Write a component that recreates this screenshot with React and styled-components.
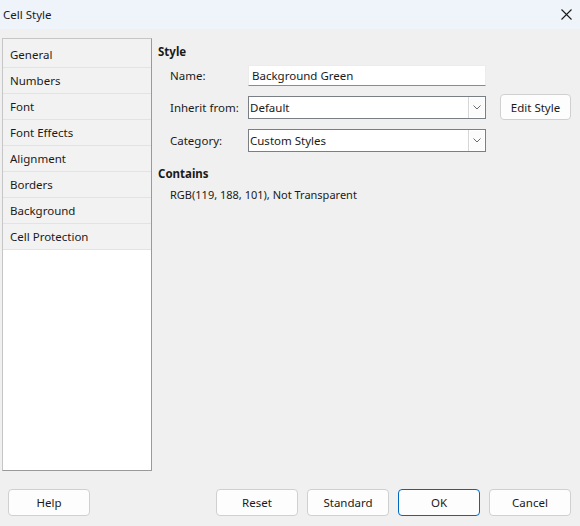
import React from "react";
import styled, { createGlobalStyle } from "styled-components";

const GlobalStyle = createGlobalStyle`
  html, body {
    margin: 0;
    padding: 0;
    background: #f0f0f0;
  }
  body {
    font-family: "Noto Sans", "Open Sans", sans-serif;
    font-size: 11.5px;
    color: #1a1a1a;
  }
`;

const pages = [
  "General",
  "Numbers",
  "Font",
  "Font Effects",
  "Alignment",
  "Borders",
  "Background",
  "Cell Protection",
];

export default function App() {
  return (
    <>
      <GlobalStyle />
      <StyledWindow>
        <StyledTitleBar>
          <StyledTitle>Cell Style</StyledTitle>
          <StyledClose aria-label="Close">
            <svg width={11} height={11} viewBox="0 0 11 11">
              <path d="M0.5 0.5L10.5 10.5M10.5 0.5L0.5 10.5" stroke="#1a1a1a" strokeWidth="1.1" />
            </svg>
          </StyledClose>
        </StyledTitleBar>

        <StyledBody>
          <StyledSidebar>
            {pages.map((page, index) => (
              <StyledTab key={page} $first={index === 0}>
                {page}
              </StyledTab>
            ))}
          </StyledSidebar>

          <StyledContent>
            <StyledHeading>Style</StyledHeading>
            <StyledForm>
              <StyledLabel>Name:</StyledLabel>
              <StyledTextField>Background Green</StyledTextField>
              <span />

              <StyledLabel>Inherit from:</StyledLabel>
              <StyledCombo>
                <StyledComboText>Default</StyledComboText>
                <StyledComboButton>
                  <Chevron />
                </StyledComboButton>
              </StyledCombo>
              <StyledButton $small>Edit Style</StyledButton>

              <StyledLabel>Category:</StyledLabel>
              <StyledCombo>
                <StyledComboText>Custom Styles</StyledComboText>
                <StyledComboButton>
                  <Chevron />
                </StyledComboButton>
              </StyledCombo>
              <span />
            </StyledForm>

            <StyledHeading $gap>Contains</StyledHeading>
            <StyledDescription>RGB(119, 188, 101), Not Transparent</StyledDescription>
          </StyledContent>
        </StyledBody>

        <StyledFooter>
          <StyledButton>Help</StyledButton>
          <StyledSpacer />
          <StyledButton>Reset</StyledButton>
          <StyledButton>Standard</StyledButton>
          <StyledButton $primary>OK</StyledButton>
          <StyledButton>Cancel</StyledButton>
        </StyledFooter>
      </StyledWindow>
    </>
  );
}

function Chevron() {
  return (
    <svg width={8} height={5} viewBox="0 0 8 5">
      <path d="M0.5 0.5L4 4L7.5 0.5" fill="none" stroke="#6a6a6a" strokeWidth="1" />
    </svg>
  );
}

const StyledWindow = styled.div`
  width: 580px;
  height: 526px;
  display: flex;
  flex-direction: column;
  background: #f0f0f0;
  overflow: hidden;
`;

const StyledTitleBar = styled.div`
  height: 29px;
  flex: none;
  display: flex;
  align-items: center;
  justify-content: space-between;
  background: #eff3fa;
  padding: 0 4px 0 3px;
`;

const StyledTitle = styled.span`
  font-size: 11.5px;
  color: #1a1a1a;
`;

const StyledClose = styled.span`
  display: flex;
  padding: 0 4px 1px 0;
`;

const StyledBody = styled.div`
  display: flex;
  gap: 6px;
  padding: 9px 8px 0 2px;
  height: 433px;
  flex: none;
`;

const StyledSidebar = styled.ul`
  list-style: none;
  margin: 0;
  padding: 0;
  width: 148px;
  flex: none;
  background: #ffffff;
  border: 1px solid;
  border-color: #c6c6c6 #9a9a9a #9a9a9a #c6c6c6;
`;

const StyledTab = styled.li`
  height: ${(props) => (props.$first ? "29px" : "26px")};
  display: flex;
  align-items: center;
  padding: ${(props) => (props.$first ? "3px 0 0 7px" : "0 0 0 7px")};
  box-sizing: border-box;
  background: #f2f2f2;
  border-bottom: 1px solid #e3e3e3;
  font-size: 11.5px;
  color: #1a1a1a;
`;

const StyledContent = styled.div`
  flex: 1;
  display: flex;
  flex-direction: column;
`;

const StyledHeading = styled.div`
  font-weight: 700;
  font-size: 11.5px;
  line-height: 16px;
  margin-top: ${(props) => (props.$gap ? "14px" : "6px")};
  color: #1a1a1a;
`;

const StyledForm = styled.div`
  display: grid;
  grid-template-columns: 64px 238px auto;
  column-gap: 14px;
  row-gap: 10px;
  align-items: center;
  padding-left: 12px;
  margin-top: 5px;
`;

const StyledLabel = styled.span`
  font-size: 11.5px;
  color: #1a1a1a;
  white-space: nowrap;
`;

const StyledTextField = styled.div`
  height: 21px;
  box-sizing: border-box;
  background: #ffffff;
  border: 1px solid #ececec;
  border-bottom: 1px solid #8b8b8b;
  padding: 0 3px;
  display: flex;
  align-items: center;
`;

const StyledCombo = styled.div`
  height: 23px;
  box-sizing: border-box;
  display: flex;
  background: #ffffff;
  border: 1px solid #7a7e85;
`;

const StyledComboText = styled.div`
  flex: 1;
  display: flex;
  align-items: center;
  padding-left: 1px;
`;

const StyledComboButton = styled.div`
  width: 16px;
  display: flex;
  align-items: center;
  justify-content: center;
  background: #fbfbfb;
  border-left: 1px solid #d6d6d6;
  box-shadow: inset 0 0 0 1px #ffffff;
`;

const StyledDescription = styled.div`
  font-size: 11px;
  line-height: 15px;
  color: #1a1a1a;
  padding-left: 12px;
  margin-top: 5px;
`;

const StyledFooter = styled.div`
  display: flex;
  align-items: center;
  gap: 9px;
  padding: 18px 9px 0 8px;
`;

const StyledSpacer = styled.div`
  flex: 1;
`;

const StyledButton = styled.button`
  width: ${(props) => (props.$small ? "71px" : "82px")};
  height: ${(props) => (props.$small ? "26px" : "27px")};
  margin: ${(props) => (props.$small ? "-2px 0 -1px" : "0")};
  box-sizing: border-box;
  font-family: inherit;
  font-size: 11.5px;
  color: #1a1a1a;
  background: #fdfdfd;
  border: 1px solid ${(props) => (props.$primary ? "#0067c0" : "#d0d0d0")};
  border-radius: 4px;
  padding: 0;
`;
